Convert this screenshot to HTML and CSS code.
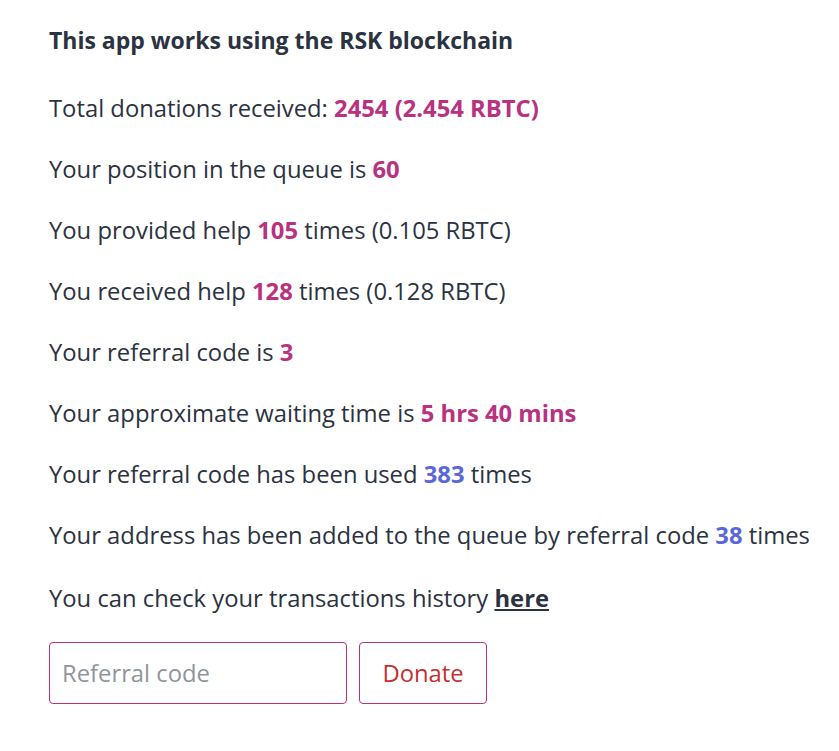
FILE: index.html
```html
<!DOCTYPE html>
<html>
<head>
<meta charset="utf-8">
<link rel="stylesheet" href="styles.css">
</head>
<body>
<main class="panel">
  <h1 class="title">This app works using the RSK blockchain</h1>
  <div class="stats">
    <p class="line">Total donations received: <b class="pink">2454 (2.454 RBTC)</b></p>
    <p class="line">Your position in the queue is <b class="pink">60</b></p>
    <p class="line">You provided help <b class="pink">105</b> times (0.105 RBTC)</p>
    <p class="line">You received help <b class="pink">128</b> times (0.128 RBTC)</p>
    <p class="line">Your referral code is <b class="pink">3</b></p>
    <p class="line">Your approximate waiting time is <b class="pink">5 hrs 40 mins</b></p>
    <p class="line">Your referral code has been used <b class="blue">383</b> times</p>
    <p class="line">Your address has been added to the queue by referral code <b class="blue">38</b> times</p>
    <p class="line history">You can check your transactions history <a class="link" href="#">here</a></p>
  </div>
  <form class="donate-form">
    <input class="ref-input" type="text" placeholder="Referral code">
    <button class="donate-btn" type="button">Donate</button>
  </form>
</main>
</body>
</html>
```

FILE: styles.css
```css
html, body {
  margin: 0;
  padding: 0;
  background: #ffffff;
}
body {
  font-family: "Open Sans", Lato, sans-serif;
  color: #2b3240;
}
.panel {
  padding: 24px 0 0 49px;
}
.title {
  margin: 0;
  font-size: 23px;
  font-weight: 700;
  line-height: 32px;
  color: #2b3240;
}
.stats {
  display: flex;
  flex-direction: column;
  gap: 25px;
  margin-top: 34px;
}
.line {
  margin: 0;
  font-size: 23.8px;
  line-height: 36px;
}
.line b {
  font-weight: 700;
}
.history {
  margin-top: 2px;
}
.pink { color: #b83280; }
.blue { color: #5a67d8; }
.link {
  color: #2b3240;
  font-weight: 700;
  text-decoration: underline;
}
.donate-form {
  display: flex;
  gap: 12px;
  margin-top: 26px;
}
.ref-input {
  width: 298px;
  height: 62px;
  box-sizing: border-box;
  border: 1.5px solid #b83280;
  border-radius: 4px;
  padding: 0 12px;
  font-family: inherit;
  font-size: 23.8px;
  color: #2b3240;
  outline: none;
}
.ref-input::placeholder {
  color: #90959d;
}
.donate-btn {
  width: 128px;
  height: 62px;
  box-sizing: border-box;
  border: 1.5px solid #b83280;
  border-radius: 4px;
  background: #ffffff;
  font-family: inherit;
  font-size: 23.8px;
  color: #c53030;
  cursor: pointer;
}
```
